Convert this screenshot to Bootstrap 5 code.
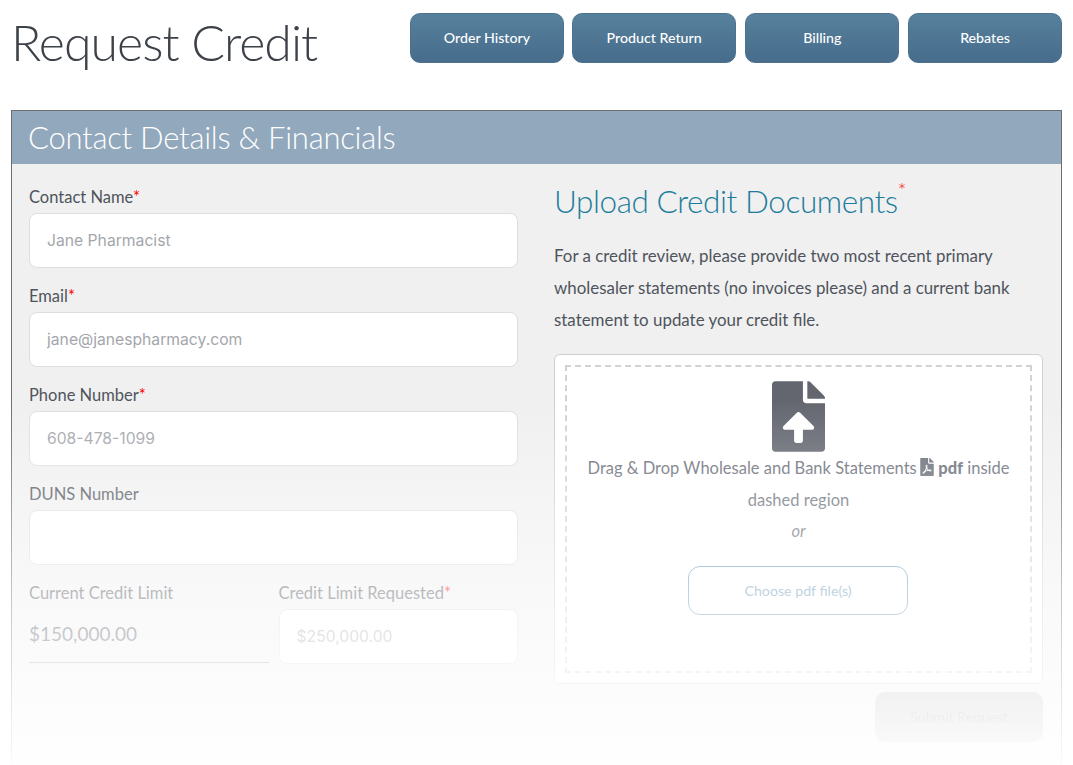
<!doctype html>
<html lang="en">
<head>
<meta charset="utf-8">
<title>Request Credit</title>
<link href="https://cdn.jsdelivr.net/npm/bootstrap@5.3.0/dist/css/bootstrap.min.css" rel="stylesheet">
<style>
html,body{height:765px;overflow:hidden}
body{font-family:"Lato","Noto Sans",sans-serif;color:#4a4f57;background:#fff;font-size:16.5px}
.page-wrap{padding:13px 11px 0 11px;position:relative;height:765px;overflow:hidden}
.top-row{height:97px}
.page-ttl{font-family:"Lato",sans-serif;font-weight:300;font-size:50px;line-height:58px;margin:0;color:#3d4249;letter-spacing:-.95px}
.top-btns{gap:8.7px}
.top-btn{width:154px;height:50px;border-radius:10px;color:#fff;font-size:14.2px;font-weight:500;border:1px solid #4d7290;background:linear-gradient(#56819c,#476c8c);display:flex;align-items:center;justify-content:center}
.top-btn:hover{color:#fff}
.top-btn.wider{width:164px;margin-left:-.5px;margin-right:.5px}
.panel{border:1px solid #6e6e6e;border-bottom:0;background:#f0f0f0;border-radius:0;height:660px}
.panel-head{background:#92a8bc;color:#fff;font-weight:300;font-size:31px;height:53px;line-height:53px;padding-left:16px;letter-spacing:-.25px}
.panel-body{padding:22px 18px 0 17px;gap:36px}
.col-side{width:489px;flex:none}
.fld-lbl{display:block;font-size:16.5px;line-height:22px;margin-bottom:5px;color:#4f545c}
.req{color:#f00}
.fld-input{height:55px;border-radius:8px;border:1px solid #dedede;background:#fff;font-family:"Inter",sans-serif;font-size:15.7px;padding:0 17px;color:#333;margin-bottom:17px}
.fld-input::placeholder{color:#a4a6ac;opacity:1}
.fld-input.short{height:55px;margin-bottom:0}
.fin-row{gap:10px}
.static-val{font-size:19px;color:#4a4f57;height:54px;line-height:50px;border-bottom:1px solid #999}
.upl-ttl{font-weight:300;font-size:31.5px;line-height:38px;color:#1d7d9c;margin:-4px 0 20px;letter-spacing:-.43px}
.upl-ttl sup{color:#f00;font-size:20px;top:-.75em}
.upl-copy{line-height:32px;font-size:16.9px;margin-bottom:18px;color:#4f545c}
.drop-outer{height:330px;border:1px solid #cfcfcf;border-radius:6px;background:#fff;padding:10px}
.drop-inner{height:100%;border:2px dashed #d2d2d2;padding-top:14px;text-align:center;color:#666b76}
.drop-icon{width:53px;height:71px;display:block;margin:0 auto 0}
.pdf-icon{width:14px;height:18px;vertical-align:-2px;margin-left:-1px}
.drop-text{line-height:32px;margin:0;padding:0 14px;font-size:16.5px}
.drop-text strong{font-weight:900}
.drop-or{line-height:30px;font-style:italic;margin:0}
.choose-btn{width:220px;height:49px;border:1px solid #5d8fb0;border-radius:12px;background:#fff;color:#5d8fb0;font-size:14.2px;margin:20px 0 0 -1px}
.submit-btn{width:168px;height:50px;border-radius:10px;background:#b4b4b4;border:0;color:#828282;font-size:14.2px;margin:8px 0 0 auto;display:block}
.fade-veil{position:absolute;left:0;right:0;top:400px;bottom:0;pointer-events:none;background:linear-gradient(rgba(255,255,255,0) 0,rgba(255,255,255,.6) 52.6%,rgba(255,255,255,.88) 87.7%,rgba(255,255,255,.97) 100%)}
</style>
</head>
<body>
<div class="page-wrap">
  <div class="top-row d-flex justify-content-between align-items-start">
    <h1 class="page-ttl">Request Credit</h1>
    <div class="top-btns d-flex">
      <a href="#" class="top-btn text-decoration-none">Order History</a>
      <a href="#" class="top-btn wider text-decoration-none">Product Return</a>
      <a href="#" class="top-btn text-decoration-none">Billing</a>
      <a href="#" class="top-btn text-decoration-none">Rebates</a>
    </div>
  </div>
  <div class="panel">
    <div class="panel-head">Contact Details &amp; Financials</div>
    <div class="panel-body d-flex">
      <div class="col-side">
        <label class="fld-lbl">Contact Name<span class="req">*</span></label>
        <input class="form-control fld-input" placeholder="Jane Pharmacist">
        <label class="fld-lbl">Email<span class="req">*</span></label>
        <input class="form-control fld-input" placeholder="jane@janespharmacy.com">
        <label class="fld-lbl">Phone Number<span class="req">*</span></label>
        <input class="form-control fld-input" placeholder="608-478-1099">
        <label class="fld-lbl">DUNS Number</label>
        <input class="form-control fld-input">
        <div class="d-flex fin-row">
          <div class="flex-fill w-50">
            <label class="fld-lbl">Current Credit Limit</label>
            <div class="static-val">$150,000.00</div>
          </div>
          <div class="flex-fill w-50">
            <label class="fld-lbl">Credit Limit Requested<span class="req">*</span></label>
            <input class="form-control fld-input short" placeholder="$250,000.00">
          </div>
        </div>
      </div>
      <div class="col-side">
        <h2 class="upl-ttl">Upload Credit Documents<sup class="req">*</sup></h2>
        <p class="upl-copy">For a credit review, please provide two most recent primary wholesaler statements (no invoices please) and a current bank statement to update your credit file.</p>
        <div class="drop-outer">
          <div class="drop-inner">
            <svg class="drop-icon" viewBox="0 0 384 512" fill="#63666f" aria-hidden="true"><path d="M224 136V0H24C10.7 0 0 10.7 0 24v464c0 13.3 10.7 24 24 24h336c13.3 0 24-10.7 24-24V160H248c-13.2 0-24-10.8-24-24zm65.18 216.01H224v80c0 8.84-7.16 16-16 16h-32c-8.84 0-16-7.16-16-16v-80H94.82c-14.28 0-21.41-17.29-11.27-27.36l96.42-95.7c6.65-6.61 17.39-6.61 24.04 0l96.42 95.7c10.15 10.07 3.03 27.36-11.25 27.36zM377 105L279.1 7c-4.5-4.5-10.6-7-17-7H256v128h128v-6.1c0-6.3-2.5-12.4-7-16.9z"/></svg>
            <p class="drop-text">Drag &amp; Drop Wholesale and Bank Statements <svg class="pdf-icon" viewBox="0 0 384 512" fill="#666b76" aria-hidden="true"><path d="M181.9 256.1c-5-16-4.9-46.9-2-46.9 8.4 0 7.6 36.9 2 46.9zm-1.7 47.2c-7.7 20.2-17.3 43.3-28.4 62.7 18.3-7 39-17.2 62.9-21.9-12.7-9.6-24.9-23.4-34.5-40.8zM86.1 428.1c0 .8 13.2-5.4 34.9-40.2-6.7 6.3-29.1 24.5-34.9 40.2zM248 160h136v328c0 13.3-10.7 24-24 24H24c-13.3 0-24-10.7-24-24V24C0 10.7 10.7 0 24 0h200v136c0 13.2 10.8 24 24 24zm-8 171.8c-20-12.2-33.3-29-42.7-53.8 4.5-18.5 11.6-46.6 6.2-64.2-4.7-29.4-42.4-26.5-47.8-6.8-5 18.3-.4 44.1 8.1 77-11.6 27.6-28.7 64.6-40.8 85.8-.1 0-.1.1-.2.1-27.1 13.9-73.6 44.5-54.5 68 5.6 6.9 16 10 21.5 10 17.9 0 35.7-18 61.1-61.8 25.8-8.5 54.1-19.1 79-23.2 21.7 11.8 47.1 19.5 64 19.5 29.2 0 31.2-32 19.7-43.4-13.9-13.6-54.3-9.7-73.6-7.2zM377 105L279 7c-4.5-4.5-10.6-7-17-7h-6v128h128v-6.1c0-6.3-2.5-12.4-7-16.9zm-74.1 255.3c4.1-2.7-2.5-11.9-42.8-9 37.1 15.8 42.8 9 42.8 9z"/></svg> <strong>pdf</strong> inside dashed region</p>
            <p class="drop-or">or</p>
            <button type="button" class="btn choose-btn">Choose pdf file(s)</button>
          </div>
        </div>
        <button type="button" class="btn submit-btn">Submit Request</button>
      </div>
    </div>
  </div>
  <div class="fade-veil"></div>
</div>
<script src="https://cdn.jsdelivr.net/npm/bootstrap@5.3.0/dist/js/bootstrap.bundle.min.js"></script>
</body>
</html>
